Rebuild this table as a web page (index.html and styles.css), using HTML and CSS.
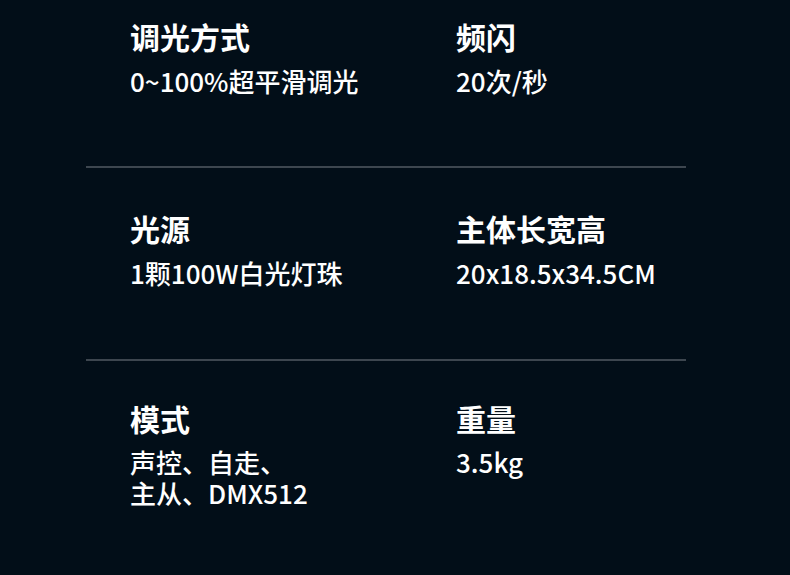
FILE: index.html
```html
<!DOCTYPE html>
<html lang="zh">
<head>
<meta charset="utf-8">
<link rel="stylesheet" href="styles.css">
</head>
<body>
<div class="specs">
  <div class="row row-first">
    <div class="item">
      <div class="label">调光方式</div>
      <div class="value">0~100%超平滑调光</div>
    </div>
    <div class="item">
      <div class="label">频闪</div>
      <div class="value">20次/秒</div>
    </div>
  </div>
  <div class="row">
    <div class="item">
      <div class="label">光源</div>
      <div class="value">1颗100W白光灯珠</div>
    </div>
    <div class="item">
      <div class="label">主体长宽高</div>
      <div class="value">20x18.5x34.5CM</div>
    </div>
  </div>
  <div class="row row-last">
    <div class="item">
      <div class="label">模式</div>
      <div class="value">声控、自走、<br>主从、DMX512</div>
    </div>
    <div class="item">
      <div class="label">重量</div>
      <div class="value">3.5kg</div>
    </div>
  </div>
</div>
</body>
</html>
```
FILE: styles.css
```css
html, body {
  margin: 0;
  padding: 0;
  background: #020e18;
  width: 790px;
  height: 575px;
  overflow: hidden;
}
body {
  font-family: "Noto Sans CJK SC", "Noto Sans", sans-serif;
  color: #ffffff;
}
.specs {
  width: 600px;
  margin-left: 86px;
}
.row {
  display: grid;
  grid-template-columns: 326px 1fr;
  padding: 42px 0 71px 44px;
  border-bottom: 2px solid #3d464f;
}
.row-first {
  padding-top: 18px;
  padding-bottom: 70px;
}
.row-last {
  padding-top: 39px;
  border-bottom: none;
}
.label {
  font-size: 30px;
  font-weight: 700;
  line-height: 36px;
  margin-bottom: 11px;
}
.row-last .label {
  margin-bottom: 10px;
}
.value {
  font-size: 26px;
  font-weight: 500;
  line-height: 31px;
}
```
